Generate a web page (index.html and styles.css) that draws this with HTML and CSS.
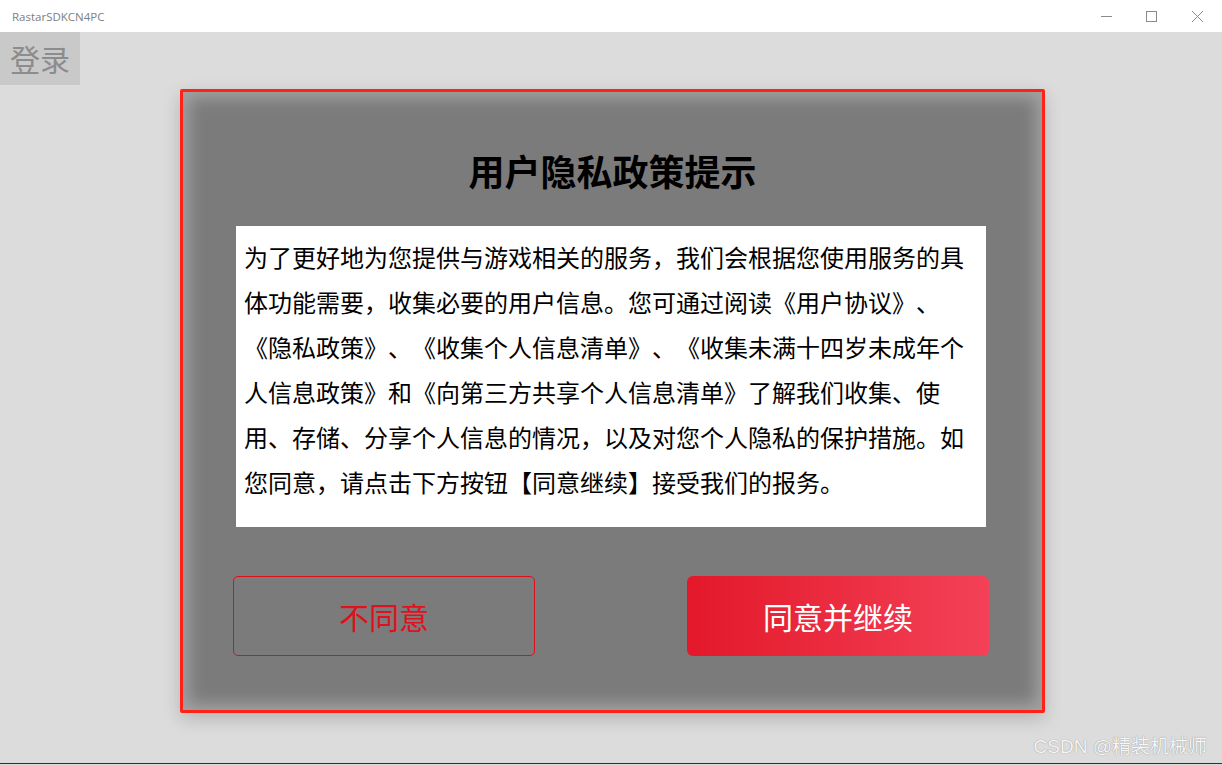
FILE: index.html
```html
<!DOCTYPE html>
<html lang="zh-CN">
<head>
    <meta charset="UTF-8">
    <meta name="viewport" content="width=device-width, initial-scale=1.0">
    <title>RastarSDKCN4PC</title>
    <link rel="stylesheet" href="styles.css">
</head>
<body>
    <div class="titlebar">
        <span class="app-name">RastarSDKCN4PC</span>
        <div class="win-controls">
            <svg width="46" height="32" viewBox="0 0 46 32"><line x1="18" y1="16.5" x2="29" y2="16.5" stroke="#8a8a8a" stroke-width="1"/></svg>
            <svg width="46" height="32" viewBox="0 0 46 32"><rect x="17.5" y="11.5" width="10" height="10" fill="none" stroke="#8a8a8a" stroke-width="1"/></svg>
            <svg width="46" height="32" viewBox="0 0 46 32"><path d="M17 11 L28 22 M28 11 L17 22" stroke="#8a8a8a" stroke-width="1"/></svg>
        </div>
    </div>

    <div class="main">
        <div class="login-tab">登录</div>

        <div class="privacy-dialog">
            <h2 class="dialog-title">用户隐私政策提示</h2>
            <div class="dialog-body">
                <p class="policy-text">为了更好地为您提供与游戏相关的服务，我们会根据您使用服务的具<br>体功能需要，收集必要的用户信息。您可通过阅读《用户协议》、<br>《隐私政策》、《收集个人信息清单》、《收集未满十四岁未成年个<br>人信息政策》和《向第三方共享个人信息清单》了解我们收集、使<br>用、存储、分享个人信息的情况，以及对您个人隐私的保护措施。如<br>您同意，请点击下方按钮【同意继续】接受我们的报务。</p>
            </div>
            <div class="dialog-actions">
                <button class="btn-decline">不同意</button>
                <button class="btn-accept">同意并继续</button>
            </div>
        </div>

        <div class="watermark">CSDN @精装机械师</div>
    </div>
</body>
</html>
```

FILE: styles.css
```css
* {
  box-sizing: border-box;
}

body {
  margin: 0;
  width: 1222px;
  height: 765px;
  overflow: hidden;
  font-family: "Noto Sans CJK SC", "Noto Sans", sans-serif;
  background: #dcdcdc;
}

.titlebar {
  height: 32px;
  background: #ffffff;
  display: flex;
  align-items: center;
  justify-content: space-between;
}

.app-name {
  padding-left: 12px;
  font-family: "Open Sans", "Noto Sans", sans-serif;
  font-size: 11.5px;
  color: #808080;
}

.win-controls {
  display: flex;
  height: 32px;
  padding-right: 1px;
}

.main {
  position: relative;
  height: 732px;
  background: #dcdcdc;
  border-bottom: 1px solid #303030;
}

.login-tab {
  width: 80px;
  height: 53px;
  background: #c9c9c9;
  color: #8c8c8c;
  font-size: 30px;
  line-height: 53px;
  text-align: center;
}

/* modal over the page */
.privacy-dialog {
  position: absolute;
  left: 180px;
  top: 57px;
  width: 865px;
  height: 624px;
  border: 3px solid #ff2216;
  border-radius: 2px;
  background: #7b7b7b;
  box-shadow: inset 0 0 16px 6px #a3a3a3, 0 6px 18px rgba(0, 0, 0, 0.18);
  padding-top: 56px;
}

.dialog-title {
  margin: 0;
  text-align: center;
  font-size: 36px;
  line-height: 44px;
  font-weight: bold;
  color: #000;
}

.dialog-body {
  padding: 34px 56px 0 53px;
}

.policy-text {
  margin: 0;
  width: 750px;
  background: #ffffff;
  padding: 8px 6px 23px 8px;
  font-size: 24px;
  line-height: 45px;
  color: #000;
  white-space: nowrap;
  text-spacing-trim: space-all;
  font-feature-settings: "halt" 0, "chws" 0;
}

.dialog-actions {
  display: flex;
  justify-content: space-between;
  padding: 49px 53px 0 50px;
}

.dialog-actions button {
  width: 302px;
  height: 80px;
  font-family: "Noto Sans CJK SC", sans-serif;
  font-size: 30px;
  cursor: pointer;
  padding: 0;
}

.btn-decline {
  background: transparent;
  border: 1px solid #dc0f1c;
  border-radius: 5px;
  color: #e0101c;
}

.btn-accept {
  background: linear-gradient(to right, #e3182a, #f44157);
  border: none;
  border-radius: 6px;
  color: #ffffff;
}

.watermark {
  position: absolute;
  right: 15px;
  bottom: 5px;
  font-family: "Liberation Sans", "Noto Sans CJK SC", sans-serif;
  font-size: 19px;
  color: #f6f6f6;
  text-shadow: 0 0 1px #777;
}
```
